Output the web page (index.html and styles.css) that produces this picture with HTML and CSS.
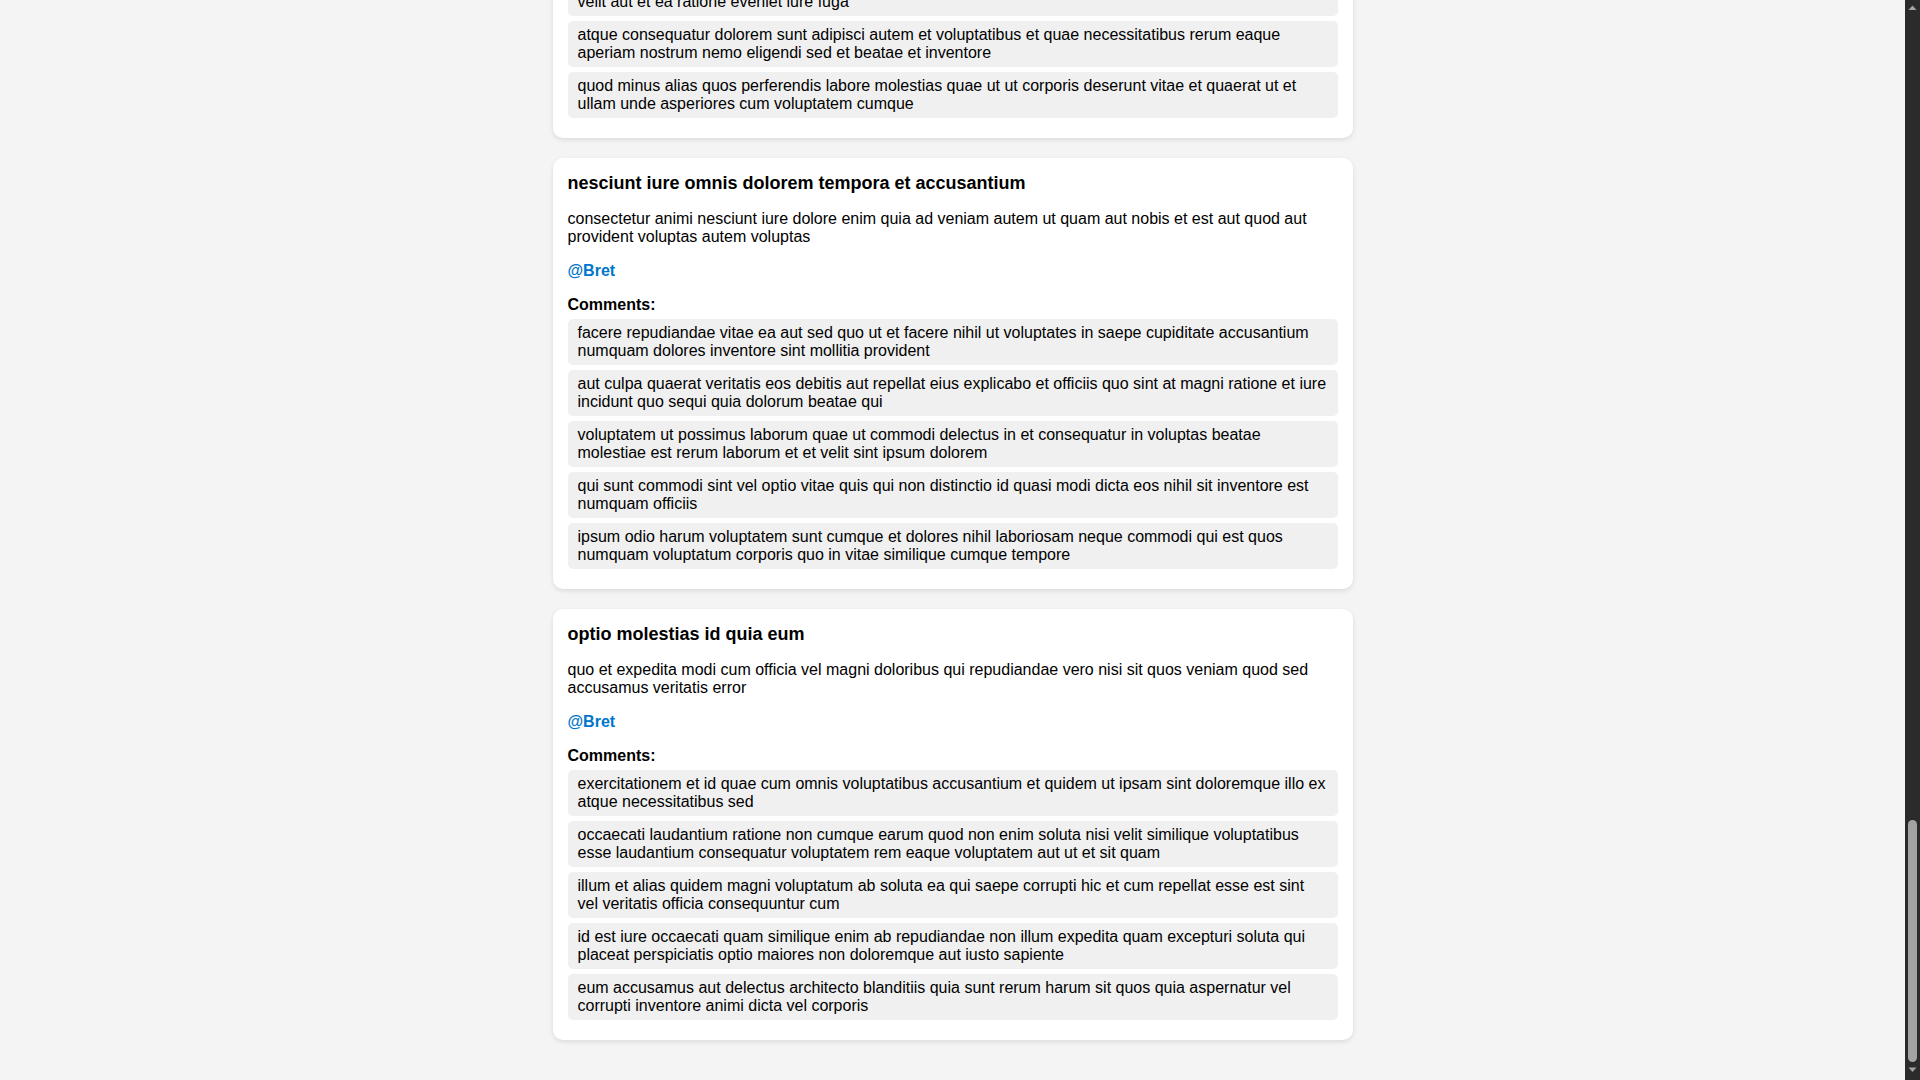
FILE: index.html
```
<!DOCTYPE html>
<html lang="en">
<head>
<meta charset="utf-8">
<title>Posts</title>
<link rel="stylesheet" href="styles.css">
</head>
<body>
<main class="feed">
  <div class="container">
    <div class="post">
      <ul class="comments">
        <li class="comment">ut dolorum nostrum quia aut est fuga est inventore vel eligendi explicabo quis consectetur aut occaecati velit aut et ea ratione eveniet iure fuga</li>
        <li class="comment">atque consequatur dolorem sunt adipisci autem et voluptatibus et quae necessitatibus rerum eaque aperiam nostrum nemo eligendi sed et beatae et inventore</li>
        <li class="comment">quod minus alias quos perferendis labore molestias quae ut ut corporis deserunt vitae et quaerat ut et ullam unde asperiores cum voluptatem cumque</li>
      </ul>
    </div>

    <div class="post">
      <h3 class="post-title">nesciunt iure omnis dolorem tempora et accusantium</h3>
      <p class="post-body">consectetur animi nesciunt iure dolore enim quia ad veniam autem ut quam aut nobis et est aut quod aut provident voluptas autem voluptas</p>
      <p class="post-author"><a class="author-link" href="#">@Bret</a></p>
      <h4 class="comments-title">Comments:</h4>
      <ul class="comments">
        <li class="comment">facere repudiandae vitae ea aut sed quo ut et facere nihil ut voluptates in saepe cupiditate accusantium numquam dolores inventore sint mollitia provident</li>
        <li class="comment">aut culpa quaerat veritatis eos debitis aut repellat eius explicabo et officiis quo sint at magni ratione et iure incidunt quo sequi quia dolorum beatae qui</li>
        <li class="comment">voluptatem ut possimus laborum quae ut commodi delectus in et consequatur in voluptas beatae molestiae est rerum laborum et et velit sint ipsum dolorem</li>
        <li class="comment">qui sunt commodi sint vel optio vitae quis qui non distinctio id quasi modi dicta eos nihil sit inventore est numquam officiis</li>
        <li class="comment">ipsum odio harum voluptatem sunt cumque et dolores nihil laboriosam neque commodi qui est quos numquam voluptatum corporis quo in vitae similique cumque tempore</li>
      </ul>
    </div>

    <div class="post">
      <h3 class="post-title">optio molestias id quia eum</h3>
      <p class="post-body">quo et expedita modi cum officia vel magni doloribus qui repudiandae vero nisi sit quos veniam quod sed accusamus veritatis error</p>
      <p class="post-author"><a class="author-link" href="#">@Bret</a></p>
      <h4 class="comments-title">Comments:</h4>
      <ul class="comments">
        <li class="comment">exercitationem et id quae cum omnis voluptatibus accusantium et quidem ut ipsam sint doloremque illo ex atque necessitatibus sed</li>
        <li class="comment">occaecati laudantium ratione non cumque earum quod non enim soluta nisi velit similique voluptatibus esse laudantium consequatur voluptatem rem eaque voluptatem aut ut et sit quam</li>
        <li class="comment">illum et alias quidem magni voluptatum ab soluta ea qui saepe corrupti hic et cum repellat esse est sint vel veritatis officia consequuntur cum</li>
        <li class="comment">id est iure occaecati quam similique enim ab repudiandae non illum expedita quam excepturi soluta qui placeat perspiciatis optio maiores non doloremque aut iusto sapiente</li>
        <li class="comment">eum accusamus aut delectus architecto blanditiis quia sunt rerum harum sit quos quia aspernatur vel corrupti inventore animi dicta vel corporis</li>
      </ul>
    </div>
  </div>
</main>

<div class="scrollbar" aria-hidden="true">
  <div class="scrollbar-button">
    <svg width="15" height="15" viewBox="0 0 15 15"><polygon points="3.5,10 11.5,10 7.5,5.5" fill="#a3a3a3"/></svg>
  </div>
  <div class="scrollbar-track">
    <div class="scrollbar-thumb"></div>
  </div>
  <div class="scrollbar-button">
    <svg width="15" height="15" viewBox="0 0 15 15"><polygon points="3.5,2.5 11.5,2.5 7.5,7" fill="#a3a3a3"/></svg>
  </div>
</div>
</body>
</html>
```

FILE: styles.css
```
html,
body {
  height: 100%;
  margin: 0;
}

body {
  display: flex;
  overflow: hidden;
  background: #f4f4f4;
  color: #000;
  font-family: "Liberation Sans", Arial, sans-serif;
  font-size: 16px;
}

.feed {
  flex: 1;
  min-width: 0;
  display: flex;
  flex-direction: column;
  justify-content: flex-end;
  overflow: hidden;
  padding: 20px;
}

.container {
  width: 100%;
  max-width: 800px;
  margin: 0 auto;
  flex-shrink: 0;
}

.post {
  background: #fff;
  padding: 15px;
  margin-bottom: 20px;
  border-radius: 10px;
  box-shadow: 0 2px 5px rgba(0, 0, 0, 0.1);
}

.post-title {
  margin: 0 0 10px;
  font-size: 18px;
  font-weight: bold;
}

.post-body {
  margin: 16px 0;
}

.post-author {
  margin: 16px 0;
}

.author-link {
  color: #0077cc;
  font-weight: bold;
  text-decoration: none;
}

.comments-title {
  margin: 16px 0 5px;
  font-size: 16px;
  font-weight: bold;
}

.comments {
  list-style: none;
  margin: 0;
  padding: 0;
}

.comment {
  background: #f0f0f0;
  padding: 5px 10px;
  margin-bottom: 5px;
  border-radius: 5px;
}

/* window scrollbar, scrolled to the end of the feed */
.scrollbar {
  flex: 0 0 15px;
  display: flex;
  flex-direction: column;
  background: #2b2b2b;
}

.scrollbar-button {
  flex: 0 0 15px;
  height: 15px;
}

.scrollbar-button svg {
  display: block;
}

.scrollbar-track {
  flex: 1;
  display: flex;
  flex-direction: column;
  justify-content: flex-end;
  padding: 0 3px 3px;
}

.scrollbar-thumb {
  height: 242px;
  border-radius: 5px;
  background: #a3a3a3;
}
```
